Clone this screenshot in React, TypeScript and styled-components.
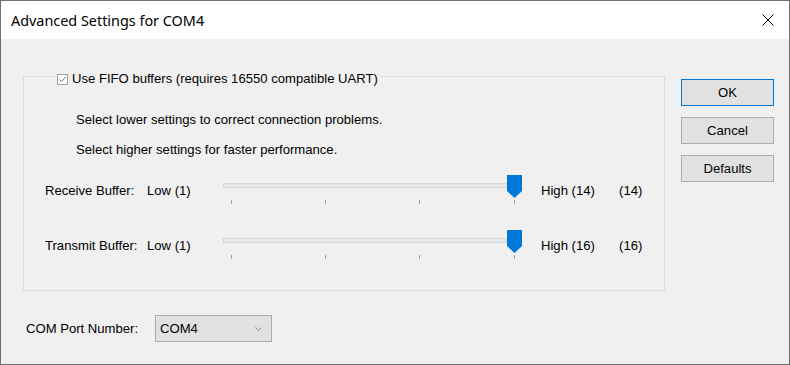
import React from "react";
import styled, { createGlobalStyle } from "styled-components";

const GlobalStyle = createGlobalStyle`
  html, body {
    margin: 0;
    padding: 0;
    background: #f0f0f0;
  }
  body {
    font-family: "Liberation Sans", Arial, sans-serif;
    font-size: 13.1px;
    color: #000;
  }
`;

interface BufferSetting {
  label: string;
  min: number;
  max: number;
  value: number;
}

const buffers: BufferSetting[] = [
  { label: "Receive Buffer:", min: 1, max: 14, value: 14 },
  { label: "Transmit Buffer:", min: 1, max: 16, value: 16 },
];

const TICKS = [8, 102, 196, 291];

const CheckIcon = () => (
  <svg width="11" height="11" viewBox="0 0 11 11">
    <rect x="0.5" y="0.5" width="10" height="10" fill="#fbfbfb" stroke="#a2a2a2" />
    <path d="M2.5 5.5 L4.5 7.5 L8.5 3.2" fill="none" stroke="#7c7c7c" strokeWidth="1" />
  </svg>
);

const CloseIcon = () => (
  <svg width="12" height="12" viewBox="0 0 12 12">
    <path d="M0.5 0.5 L11.5 11.5 M11.5 0.5 L0.5 11.5" stroke="#000" strokeWidth="1" />
  </svg>
);

const Slider = ({ min, max, value }: { min: number; max: number; value: number }) => {
  const center = TICKS[0] + ((value - min) / (max - min)) * (TICKS[3] - TICKS[0]);
  return (
    <SliderBox>
      <Track />
      {TICKS.map((t) => (
        <Tick key={t} style={{ left: t }} />
      ))}
      <Thumb style={{ left: center - 7.5 }} width="15" height="23" viewBox="0 0 15 23">
        <path d="M0 0 H15 V16 L7.5 23 L0 16 Z" fill="#0078d7" />
      </Thumb>
    </SliderBox>
  );
};

const App = () => {
  return (
    <>
      <GlobalStyle />
      <Window>
        <TitleBar>
          <Title>Advanced Settings for COM4</Title>
          <CloseButton>
            <CloseIcon />
          </CloseButton>
        </TitleBar>
        <Body>
          <LeftColumn>
            <GroupBox>
              <Legend>
                <CheckIcon />
                <span>Use FIFO buffers (requires 16550 compatible UART)</span>
              </Legend>
              <Note $top={25}>Select lower settings to correct connection problems.</Note>
              <Note $top={14}>Select higher settings for faster performance.</Note>
              {buffers.map((b, i) => (
                <SliderRow key={b.label} $top={i === 0 ? 17 : 25}>
                  <RowLabel $width={102}>{b.label}</RowLabel>
                  <RowLabel $width={76}>Low ({b.min})</RowLabel>
                  <Slider min={b.min} max={b.max} value={b.value} />
                  <RowLabel $width={78} $left={19}>
                    High ({b.max})
                  </RowLabel>
                  <RowLabel>({b.value})</RowLabel>
                </SliderRow>
              ))}
            </GroupBox>
            <PortRow>
              <PortLabel>COM Port Number:</PortLabel>
              <ComboBox>
                <span>COM4</span>
                <svg width="7" height="4" viewBox="0 0 7 4">
                  <path d="M0.5 0.5 L3.5 3.5 L6.5 0.5" fill="none" stroke="#8a8a8a" />
                </svg>
              </ComboBox>
            </PortRow>
          </LeftColumn>
          <ButtonColumn>
            <Button $primary>OK</Button>
            <Button>Cancel</Button>
            <Button>Defaults</Button>
          </ButtonColumn>
        </Body>
      </Window>
    </>
  );
};

export default App;

const Window = styled.div`
  width: 790px;
  height: 365px;
  box-sizing: border-box;
  border: 1px solid #6f6f6f;
  background: #f0f0f0;
  display: flex;
  flex-direction: column;
  overflow: hidden;
`;

const TitleBar = styled.div`
  height: 38px;
  flex-shrink: 0;
  background: #fff;
  display: flex;
  align-items: center;
`;

const Title = styled.div`
  flex: 1;
  padding-left: 10px;
  font-family: "Noto Sans", "DejaVu Sans", sans-serif;
  font-size: 14.4px;
  color: #000;
`;

const CloseButton = styled.div`
  width: 42px;
  height: 38px;
  display: flex;
  align-items: center;
  justify-content: center;
`;

const Body = styled.div`
  display: flex;
  align-items: flex-start;
  padding: 26px 0 0 22px;
`;

const LeftColumn = styled.div`
  width: 642px;
  display: flex;
  flex-direction: column;
`;

const GroupBox = styled.fieldset`
  margin: 0;
  min-width: 0;
  box-sizing: border-box;
  width: 642px;
  border: 1px solid #dcdcdc;
  padding: 0 0 30px 0;
`;

const Legend = styled.legend`
  margin-left: 32px;
  padding: 6px 2px 0 1px;
  line-height: 16px;
  display: flex;
  align-items: center;
  gap: 4px;
`;

const Note = styled.div<{ $top: number }>`
  margin-top: ${(p) => p.$top}px;
  padding-left: 52px;
  line-height: 16px;
`;

const SliderRow = styled.div<{ $top: number }>`
  margin-top: ${(p) => p.$top}px;
  padding-left: 21px;
  display: flex;
  align-items: flex-start;
`;

const RowLabel = styled.div<{ $width?: number; $left?: number }>`
  width: ${(p) => (p.$width ? `${p.$width}px` : "auto")};
  margin-left: ${(p) => p.$left ?? 0}px;
  padding-top: 8px;
  line-height: 16px;
  white-space: nowrap;
`;

const SliderBox = styled.div`
  position: relative;
  width: 299px;
  height: 30px;
`;

const Track = styled.div`
  position: absolute;
  left: 0;
  top: 8px;
  width: 299px;
  height: 5px;
  box-sizing: border-box;
  border: 1px solid #d6d6d6;
  background: #e7e7e7;
`;

const Tick = styled.div`
  position: absolute;
  top: 25px;
  width: 1px;
  height: 4px;
  background: #a0a0a0;
`;

const Thumb = styled.svg`
  position: absolute;
  top: 0;
`;

const PortRow = styled.div`
  margin-top: 24px;
  padding-left: 3px;
  display: flex;
  align-items: center;
`;

const PortLabel = styled.div`
  width: 129px;
  line-height: 16px;
`;

const ComboBox = styled.div`
  width: 117px;
  height: 27px;
  box-sizing: border-box;
  border: 1px solid #adadad;
  background: #e1e1e1;
  display: flex;
  align-items: center;
  justify-content: space-between;
  padding: 0 9px 0 4px;
  font-size: 13.1px;
`;

const ButtonColumn = styled.div`
  margin-left: 16px;
  margin-top: 14px;
  display: flex;
  flex-direction: column;
  gap: 11px;
`;

const Button = styled.div<{ $primary?: boolean }>`
  width: 93px;
  height: 27px;
  box-sizing: border-box;
  border: 1px solid ${(p) => (p.$primary ? "#0078d7" : "#adadad")};
  background: #e1e1e1;
  display: flex;
  align-items: center;
  justify-content: center;
  font-size: 13.1px;
`;
